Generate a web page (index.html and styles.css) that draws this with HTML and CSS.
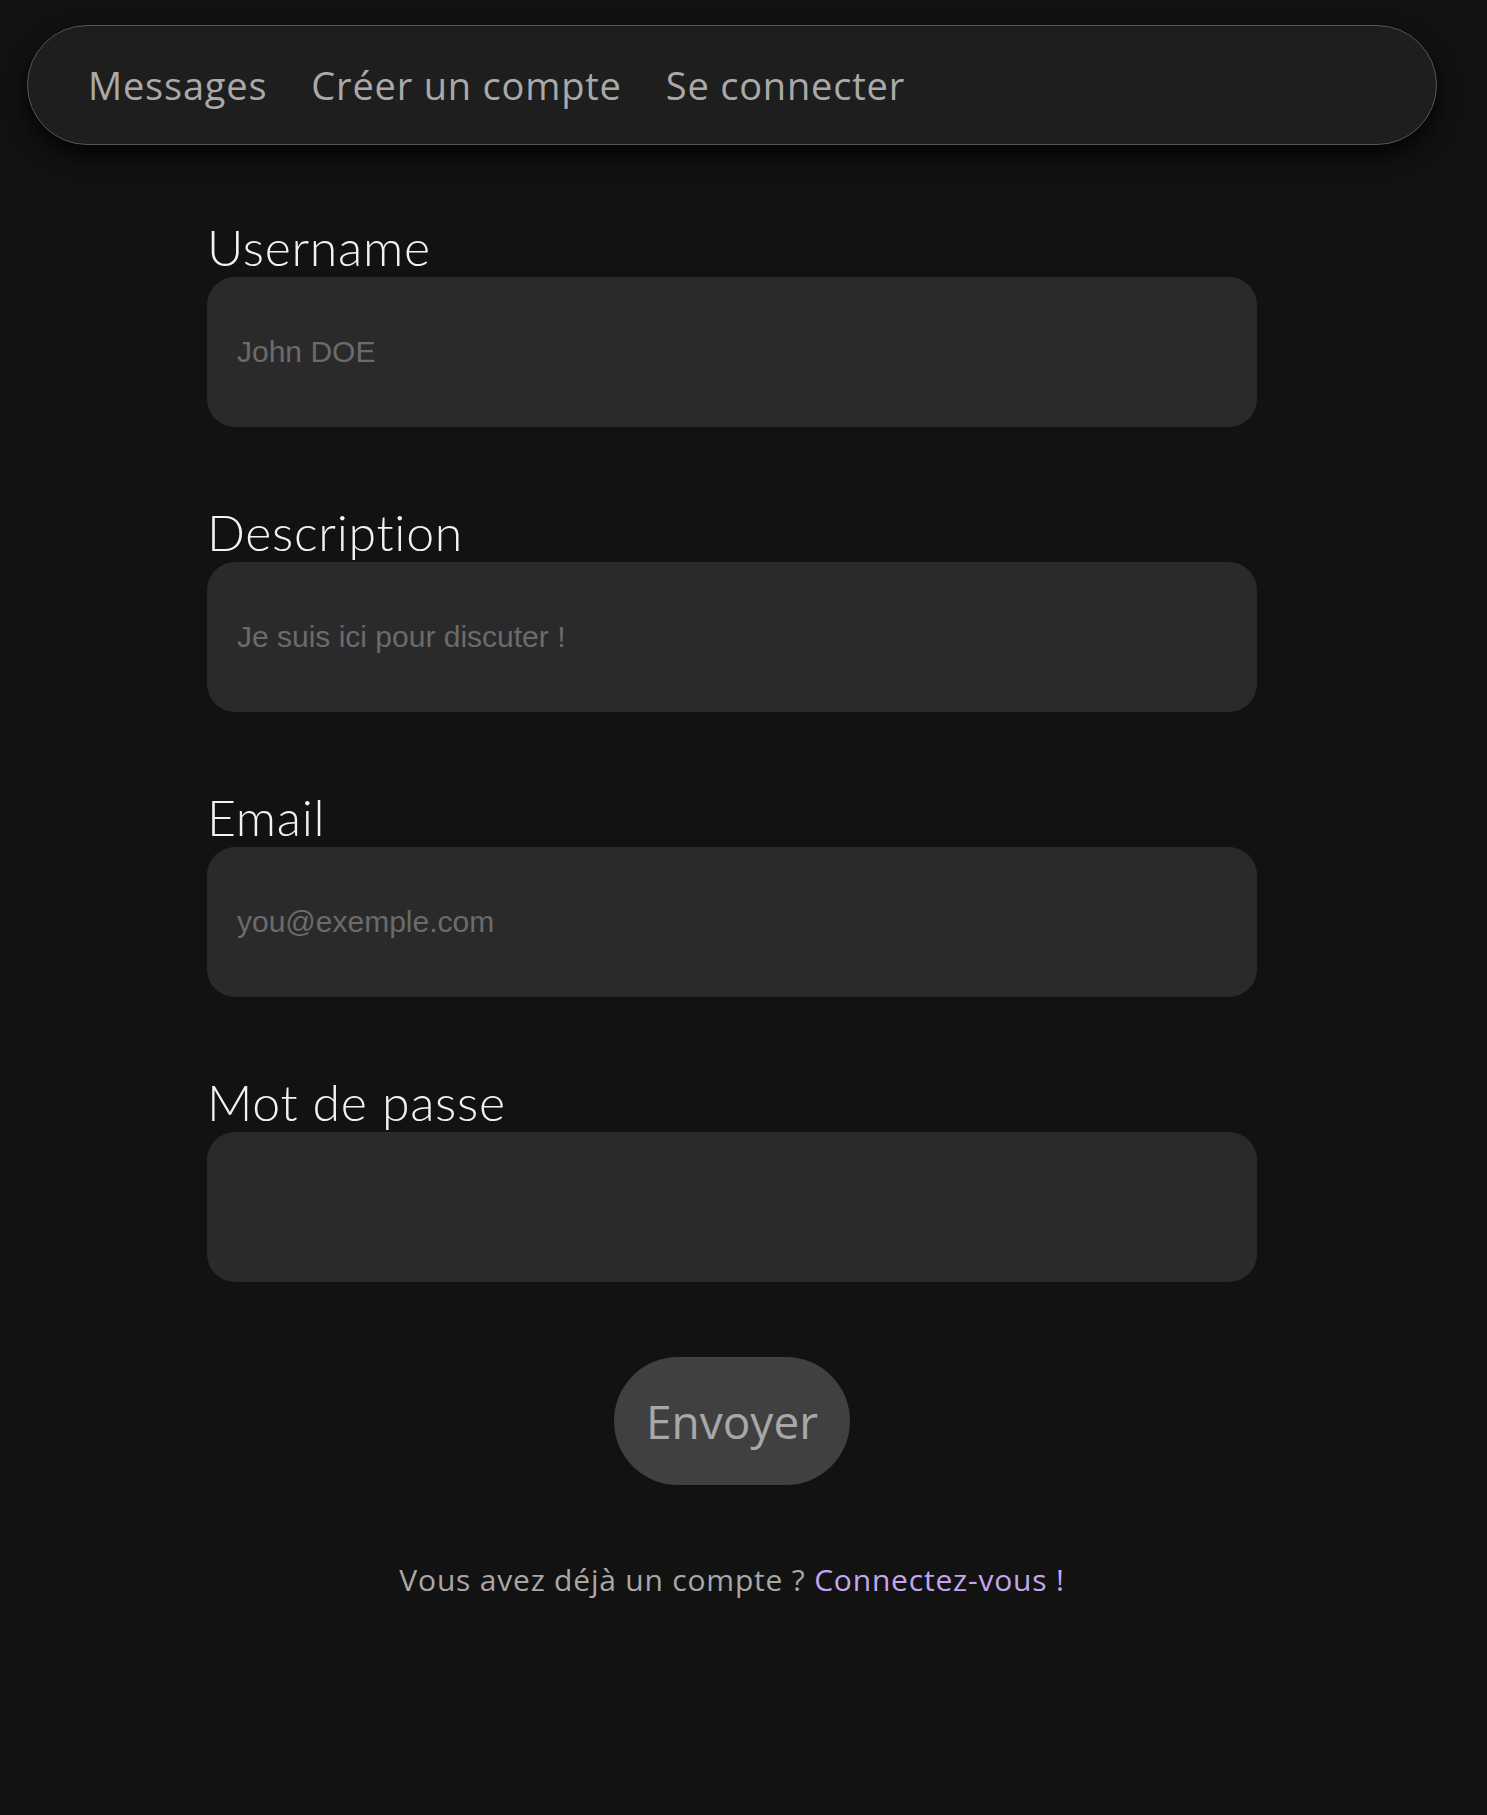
FILE: index.html
```html
<!DOCTYPE html>
<html lang="fr">
<head>
<meta charset="utf-8">
<title>Créer un compte</title>
<link rel="stylesheet" href="styles.css">
</head>
<body>
<nav class="navbar">
  <a class="nav-link" href="#">Messages</a>
  <a class="nav-link" href="#">Créer un compte</a>
  <a class="nav-link" href="#">Se connecter</a>
</nav>
<main class="form">
  <div class="field">
    <label class="label" for="username">Username</label>
    <input class="input" id="username" type="text" placeholder="John DOE">
  </div>
  <div class="field">
    <label class="label" for="description">Description</label>
    <input class="input" id="description" type="text" placeholder="Je suis ici pour discuter !">
  </div>
  <div class="field">
    <label class="label" for="email">Email</label>
    <input class="input" id="email" type="email" placeholder="you@exemple.com">
  </div>
  <div class="field">
    <label class="label" for="password">Mot de passe</label>
    <input class="input" id="password" type="password">
  </div>
  <div class="actions">
    <button class="submit" type="button">Envoyer</button>
  </div>
  <p class="footer-text">Vous avez déjà un compte ? <a class="footer-link" href="#">Connectez-vous !</a></p>
</main>
</body>
</html>
```
FILE: styles.css
```css
html, body {
  margin: 0;
  padding: 0;
  background: #121212;
}
body {
  min-height: 1815px;
  font-family: "Open Sans", "Liberation Sans", sans-serif;
}
.navbar {
  box-sizing: border-box;
  margin: 25px 50px 0 27px;
  height: 120px;
  display: flex;
  align-items: center;
  gap: 44px;
  padding: 0 0 0 60px;
  background: #1e1e1e;
  border: 1px solid #555;
  border-radius: 60px;
  box-shadow: 0 10px 26px rgba(0, 0, 0, 0.85);
}
.nav-link {
  color: #a9a9a9;
  text-decoration: none;
  font-family: "Open Sans", "Liberation Sans", sans-serif;
  font-size: 38px;
  letter-spacing: 0.8px;
  line-height: 1;
}
.form {
  width: 1050px;
  margin: 73px 0 0 207px;
}
.field {
  display: flex;
  flex-direction: column;
  margin-bottom: 76px;
}
.label {
  font-family: "Lato", "Liberation Sans", sans-serif;
  font-weight: 300;
  font-size: 50px;
  letter-spacing: 0.7px;
  font-variant-ligatures: none;
  line-height: 59px;
  color: #f2f2f2;
}
.input {
  box-sizing: border-box;
  height: 150px;
  width: 100%;
  border: none;
  outline: none;
  border-radius: 28px;
  background: #2a2a2a;
  padding: 0 30px;
  font-family: "Liberation Sans", Arial, sans-serif;
  font-size: 30px;
  color: #ddd;
}
.input::placeholder {
  color: #6b6b6b;
}
.actions {
  display: flex;
  justify-content: center;
  margin-top: -1px;
}
.submit {
  height: 128px;
  padding: 0 32px;
  border: none;
  border-radius: 64px;
  background: #404040;
  color: #a8a8a8;
  font-family: "Open Sans", "Liberation Sans", sans-serif;
  font-size: 46px;
  cursor: pointer;
}
.footer-text {
  margin: 74px 0 0;
  text-align: center;
  font-family: "Open Sans", "Liberation Sans", sans-serif;
  font-size: 30px;
  letter-spacing: 0.8px;
  color: #a8a8a8;
}
.footer-link {
  color: #c4a6ef;
  text-decoration: none;
}
```
